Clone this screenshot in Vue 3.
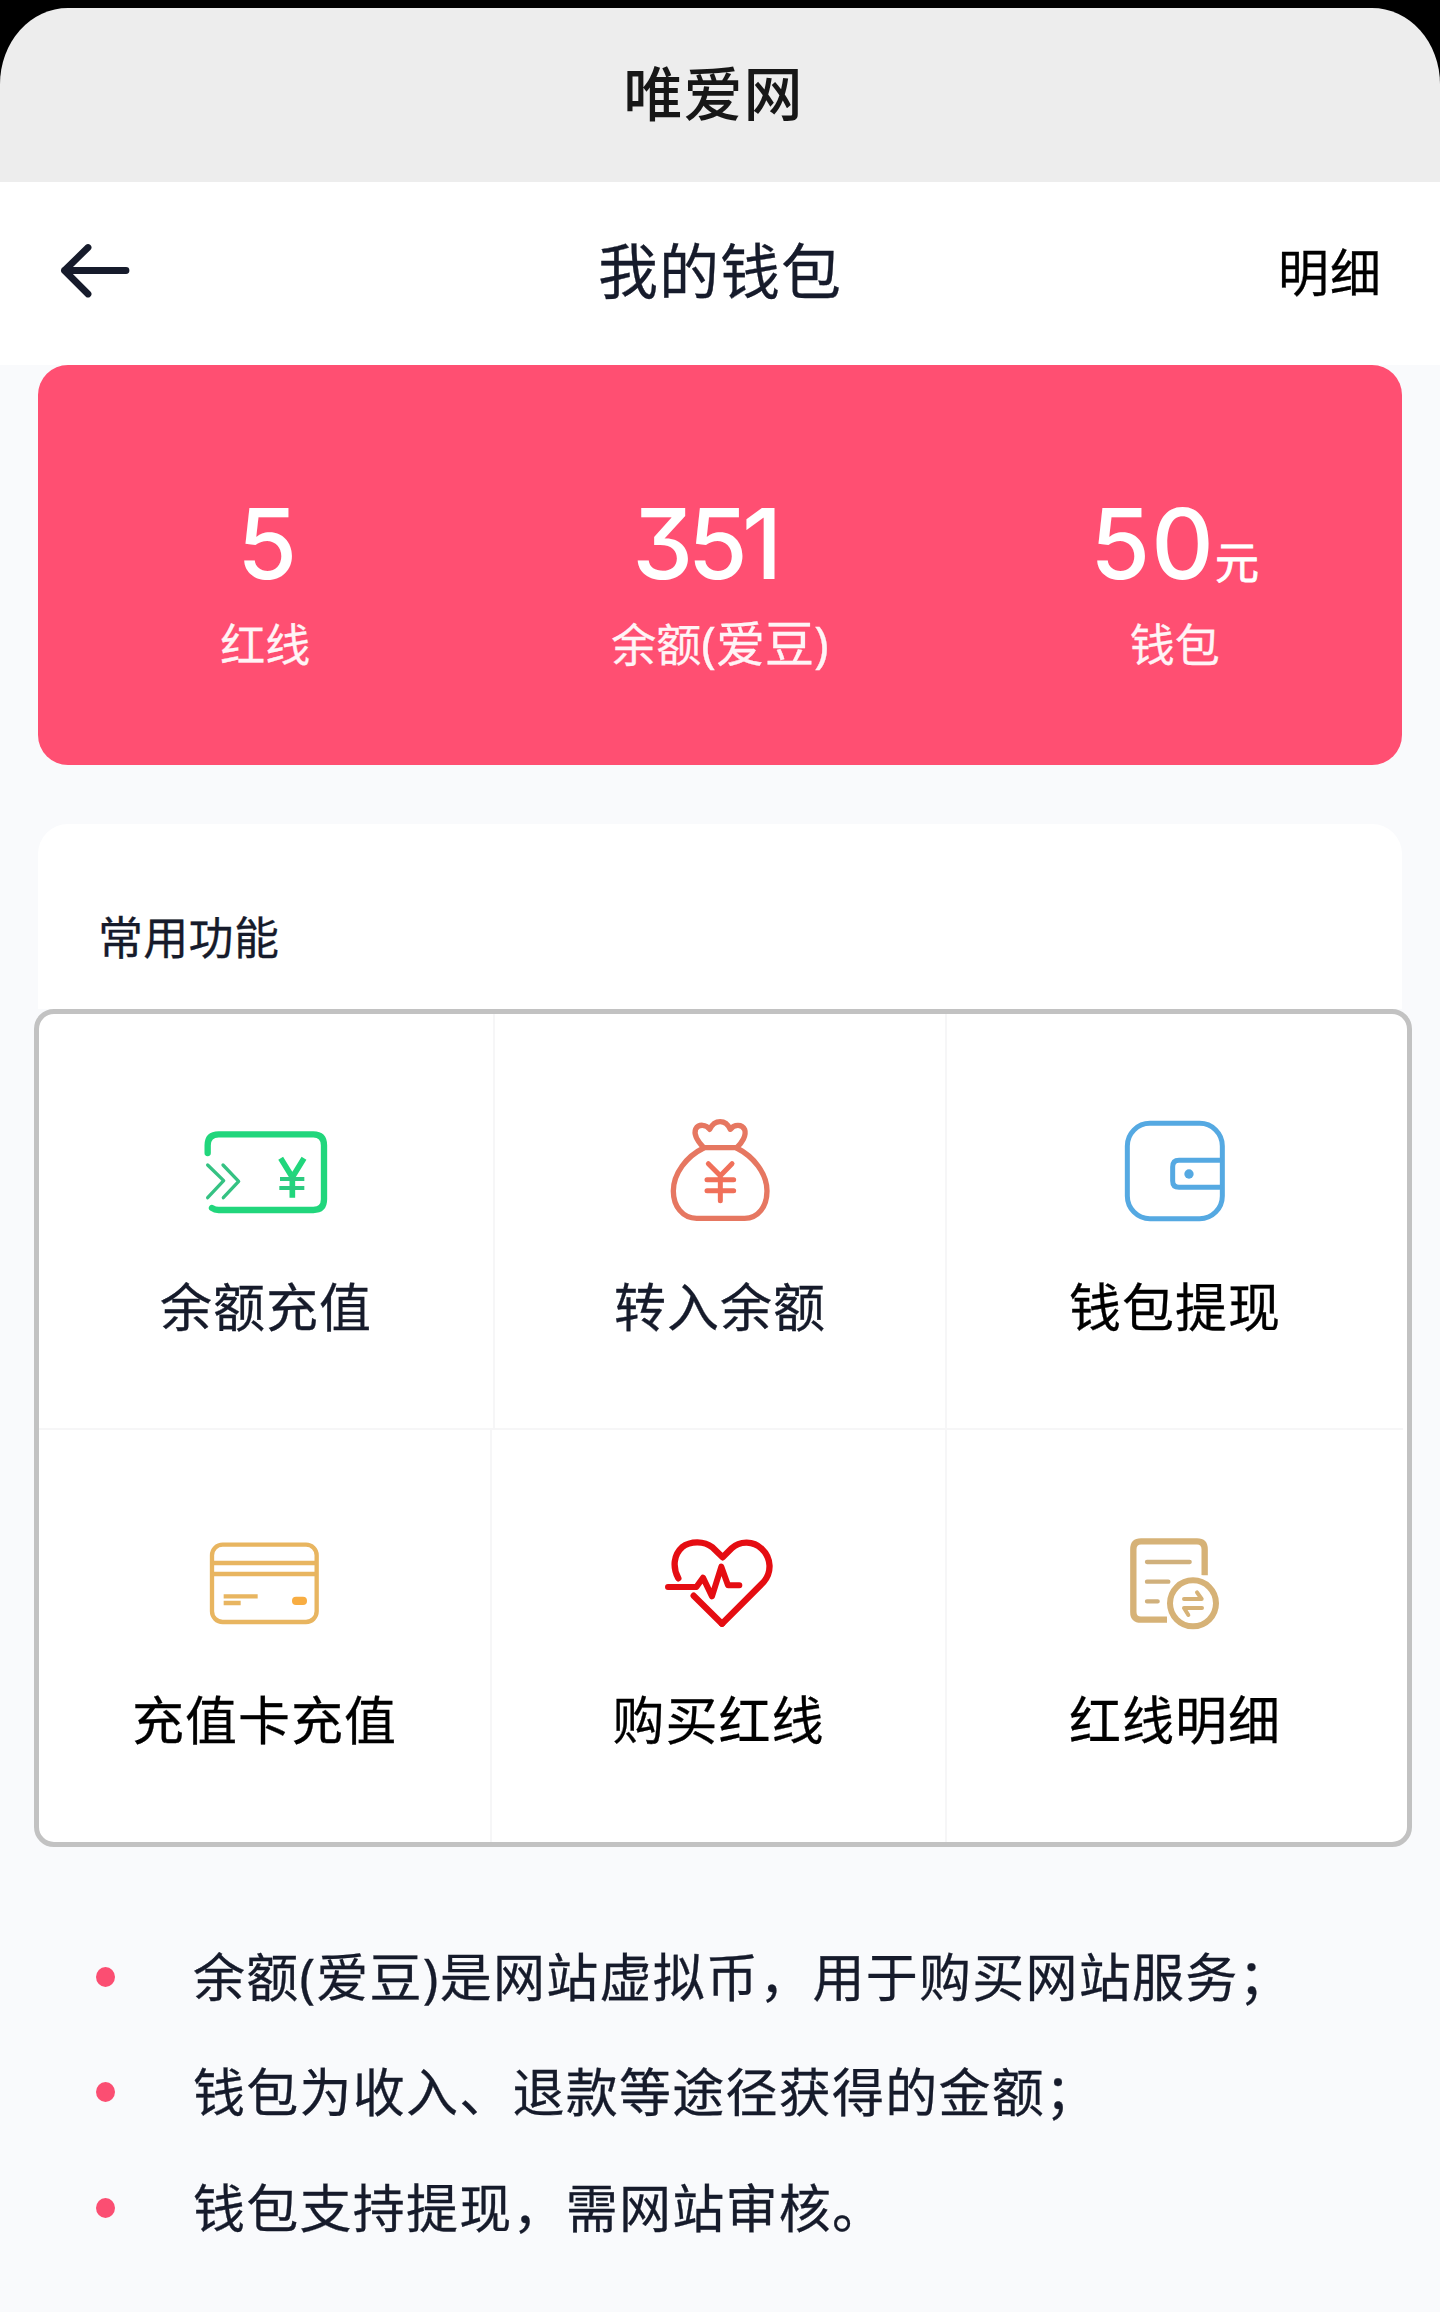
<script setup>
const stats = [
  { key: 'line', value: '5', unit: '', label: '红线', extra: '' },
  { key: 'bean', value: '351', unit: '', label: '余额', extra: '(爱豆)' },
  { key: 'wallet', value: '50', unit: '元', label: '钱包', extra: '' },
]

const notes = [
  '余额(爱豆)是网站虚拟币，用于购买网站服务；',
  '钱包为收入、退款等途径获得的金额；',
  '钱包支持提现，需网站审核。',
]
</script>

<template>
  <div class="screen">
    <div class="app-bar-wrap">
      <header class="app-bar">唯爱网</header>
    </div>

    <nav class="nav">
      <svg class="back" viewBox="0 0 76 60" fill="none" stroke="#161b2b" stroke-width="6.8" stroke-linecap="round" stroke-linejoin="round">
        <path d="M68 29.500H6.500M30 6.500L6.500 29.500L30 53" />
      </svg>
      <h1 class="nav-title">我的钱包</h1>
      <span class="nav-link">明细</span>
    </nav>

    <section class="summary">
      <div v-for="s in stats" :key="s.key" class="stat" :class="s.key">
        <div class="value"><span class="num">{{ s.value }}</span><span v-if="s.unit" class="unit">{{ s.unit }}</span></div>
        <div class="label">{{ s.label }}<span v-if="s.extra" class="extra">{{ s.extra }}</span></div>
      </div>
    </section>

    <section class="panel-head">常用功能</section>

    <section class="grid">
      <div class="row first">
        <div class="cell ink">
          <svg class="icon" viewBox="183 60 390 360" fill="none" stroke="#21d67c" stroke-linecap="round" stroke-linejoin="round">
            <path stroke-width="19" d="M203 189V166Q203 133 236 133H520Q552 133 552 166V328Q552 360 520 360H236Q224 360 216 354" />
            <path stroke="#35c283" stroke-width="10" d="M203 225L251 272L203 323M249 225L296 274L250 323" />
            <path stroke-width="17" stroke-linecap="butt" d="M422 205L457 262L492 205M457 258V323" />
            <path stroke="#2ccb80" stroke-width="12" stroke-linecap="butt" d="M420 267H493M418 294H493" />
          </svg>
          <div class="name">余额充值</div>
        </div>
        <div class="cell ink">
          <svg class="icon" viewBox="195 60 390 360" fill="none" stroke="#e67761" stroke-width="16" stroke-linecap="round" stroke-linejoin="round">
            <path d="M341 173C325 156 310 134 317 117C326 101 349 103 359 118C374 87 407 87 421 118C432 103 456 101 464 119C470 136 456 159 440 173Z" />
            <path d="M341 174C290 199 250 250 250 303C250 349 278 385 320 385H464C505 385 531 349 531 303C531 250 490 199 440 174" />
            <path stroke="#f0705a" stroke-width="15" d="M355 221L391 257L426 221M391 257V332M351 269H431M351 302H431" />
          </svg>
          <div class="name">转入余额</div>
        </div>
        <div class="cell">
          <svg class="icon" viewBox="179 60 390 360" fill="none" stroke="#55a9e2" stroke-width="15">
            <rect x="231" y="100" width="285" height="286" rx="68" />
            <path d="M516 211H386Q367 211 367 231V273Q367 292 386 292H516" />
            <circle cx="416" cy="252" r="14" fill="#55a9e2" stroke="none" />
          </svg>
          <div class="name">钱包提现</div>
        </div>
      </div>
      <div class="row second">
        <div class="cell">
          <svg class="icon" viewBox="240 60 390 360" fill="none" stroke="#e8b560" stroke-width="13">
            <rect x="276" y="104" width="314" height="232" rx="32" />
            <path d="M276 159H590M276 192H590M311 259H413M311 279H362" />
            <rect x="516" y="260" width="45" height="25" rx="12" fill="#f8ad42" stroke="none" />
          </svg>
          <div class="name">充值卡充值</div>
        </div>
        <div class="cell">
          <svg class="icon" viewBox="192 60 390 360" fill="none" stroke="#e50d12" stroke-width="19" stroke-linecap="round" stroke-linejoin="round">
            <path d="M265 205C247 172 251 134 276 112C302 92 343 93 367 112L398 142L425 115C450 91 491 93 515 116C545 144 546 188 520 217L396 341" />
            <path d="M396 341L311 257" />
            <path stroke-width="18" d="M234 231H319L339 203L366 259L394 170L414 226H448" />
          </svg>
          <div class="name">购买红线</div>
        </div>
        <div class="cell">
          <svg class="icon" viewBox="180 60 390 360" fill="none" stroke="#d6b277" stroke-linejoin="round">
            <path stroke-width="19" d="M464 196V118Q464 94 441 94H273Q250 94 250 118V306Q250 329 273 329H351" />
            <circle cx="429" cy="280" r="88" fill="#fff" stroke="none" />
            <circle cx="429" cy="280" r="69" stroke-width="18" />
            <path stroke-width="13" stroke-linecap="round" stroke="#d0b07c" d="M291 156H419M291 215H355M291 274H323" />
            <path stroke-width="12" stroke-linecap="round" d="M402 267H455L441 247M456 294H402L415 315" />
          </svg>
          <div class="name">红线明细</div>
        </div>
      </div>
    </section>

    <ul class="notes">
      <li v-for="n in notes" :key="n">{{ n }}</li>
    </ul>
  </div>
</template>

<style>
body {
  background: #f9fafc;
}
</style>

<style scoped>
.screen {
  width: 1440px;
  height: 2312px;
  overflow: hidden;
  background: #f9fafc;
  color: #161b2b;
  font-family: "Noto Sans", "Noto Sans CJK SC", sans-serif;
  -webkit-text-stroke: 0.3px currentColor;
}
.app-bar-wrap {
  background: #000;
  padding-top: 8px;
}
.app-bar {
  box-sizing: border-box;
  height: 174px;
  padding-right: 13px;
  border-radius: 68px 68px 0 0 / 76px 76px 0 0;
  background: #ededed;
  color: #171717;
  font-family: "Noto Sans CJK SC", sans-serif;
  font-size: 59px;
  font-weight: 500;
  letter-spacing: 1px;
  line-height: 166px;
  text-align: center;
  -webkit-text-stroke: 0;
}
.nav {
  box-sizing: border-box;
  height: 183px;
  padding: 0 58px 12px 58px;
  background: #fff;
  display: grid;
  grid-template-columns: 1fr auto 1fr;
  align-items: center;
  font-family: "Noto Sans CJK SC", sans-serif;
}
.back {
  width: 76px;
  height: 60px;
  margin-top: 6px;
}
.nav-title {
  margin: 0;
  font-size: 60px;
  font-weight: 400;
  letter-spacing: 1px;
  line-height: 90px;
}
.nav-link {
  justify-self: end;
  margin-top: 4px;
  color: #000;
  font-size: 51px;
  letter-spacing: 1px;
  line-height: 80px;
}
.summary {
  box-sizing: border-box;
  width: 1364px;
  height: 400px;
  margin: 0 38px;
  padding-top: 128px;
  border-radius: 30px;
  background: #ff4f72;
  color: #fff;
  display: grid;
  grid-template-columns: repeat(3, 1fr);
}
.stat {
  text-align: center;
}
.value {
  height: 100px;
  display: flex;
  justify-content: center;
  align-items: baseline;
}
.num {
  font-family: Inter, sans-serif;
  font-feature-settings: "cv09";
  font-size: 97px;
  font-weight: 500;
  line-height: 101px;
  -webkit-text-stroke: 0;
}
.line .num {
  padding-left: 4px;
}
.bean .num {
  padding-right: 31px;
  letter-spacing: -5.500px;
}
.wallet .num {
  letter-spacing: 1px;
}
.unit {
  font-family: "Noto Sans CJK SC", sans-serif;
  font-size: 44px;
  line-height: 48px;
  -webkit-text-stroke: 0.8px currentColor;
}
.label {
  height: 60px;
  margin-top: 20px;
  font-family: "Noto Sans CJK SC", sans-serif;
  font-size: 45px;
  line-height: 60px;
  opacity: 0.94;
}
.extra {
  font-family: "Noto Sans", "Noto Sans CJK SC", sans-serif;
  font-size: 49px;
  line-height: 40px;
}
.panel-head {
  box-sizing: border-box;
  width: 1364px;
  height: 185px;
  margin: 59px 38px 0;
  padding: 82px 0 0 60px;
  border-radius: 30px 30px 0 0;
  background: #fff;
  font-family: "Noto Sans CJK SC", sans-serif;
  font-size: 45px;
  letter-spacing: 0.3px;
  line-height: 60px;
}
.grid {
  box-sizing: border-box;
  width: 1378px;
  height: 838px;
  margin-left: 34px;
  padding-right: 4px;
  border: 5px solid #c2c2c2;
  border-radius: 20px;
  background: #fff;
  font-family: "Noto Sans CJK SC", sans-serif;
}
.row {
  display: grid;
  box-sizing: border-box;
}
.first {
  height: 416px;
  grid-template-columns: 456px 452px 1fr;
  border-bottom: 2px solid #f6f6f7;
}
.second {
  height: 412px;
  grid-template-columns: 453px 455px 1fr;
}
.cell {
  display: flex;
  flex-direction: column;
  align-items: center;
  padding-top: 96px;
  border-right: 2px solid #f6f6f7;
  color: #000;
}
.second .cell {
  padding-top: 100px;
}
.cell:last-child {
  border-right: 0;
}
.cell.ink {
  color: #161b2b;
}
.icon {
  width: 130px;
  height: 120px;
}
.name {
  margin-top: 40px;
  font-size: 52px;
  letter-spacing: 1px;
  line-height: 70px;
}
.second .name {
  margin-top: 33px;
}
.notes {
  margin: 72px 0 0;
  padding: 0 0 0 96px;
  list-style: none;
}
.notes li {
  display: flex;
  align-items: center;
  height: 115.500px;
  font-size: 52px;
  letter-spacing: 1.250px;
  line-height: 76px;
  white-space: nowrap;
}
.notes li::before {
  content: "";
  width: 19px;
  height: 20px;
  margin: 0 78px 0 0;
  border-radius: 50%;
  background: #fb4e72;
}
</style>
